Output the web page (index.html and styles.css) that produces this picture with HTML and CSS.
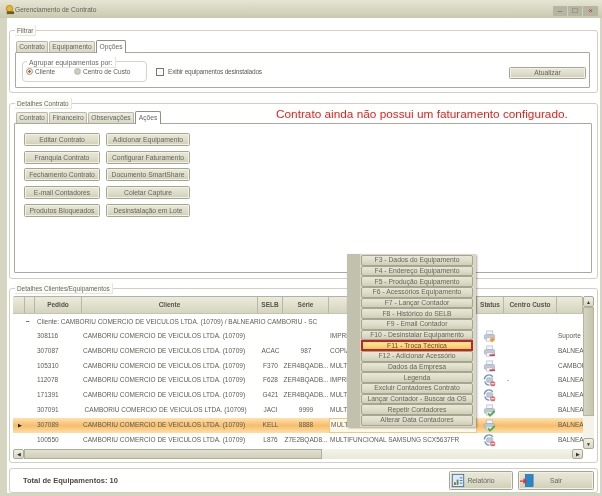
FILE: index.html
```html
<!DOCTYPE html>
<html lang="pt">
<head>
<meta charset="utf-8">
<title>Gerenciamento de Contrato</title>
<link rel="stylesheet" href="styles.css">
</head>
<body>
<svg class="defs" width="0" height="0">
  <defs>
    <symbol id="printer" viewBox="0 0 14 14">
      <rect x="4" y="1" width="6.5" height="4" fill="#f3f5f8" stroke="#aab4c2" stroke-width=".7"/>
      <rect x="1.5" y="5" width="11" height="5" rx="1" fill="#c0c9d5" stroke="#98a4b5" stroke-width=".6"/>
      <rect x="3.5" y="8.5" width="7" height="3.5" fill="#f7f8fa" stroke="#aab4c2" stroke-width=".6"/>
    </symbol>
    <symbol id="i-plus" viewBox="0 0 14 14">
      <use href="#printer" width="14" height="14"/>
      <path d="M10 8v5M7.5 10.500h5" stroke="#f09a2a" stroke-width="2"/>
    </symbol>
    <symbol id="i-minus" viewBox="0 0 14 14">
      <use href="#printer" width="14" height="14"/>
      <path d="M7 11h6" stroke="#d0404a" stroke-width="1.800"/>
    </symbol>
    <symbol id="i-check" viewBox="0 0 14 14">
      <use href="#printer" width="14" height="14"/>
      <path d="M5.500 10l2 2.500 5-5" fill="none" stroke="#4fb040" stroke-width="2"/>
    </symbol>
    <symbol id="i-sync" viewBox="0 0 14 14">
      <path d="M1.500 6a5 5 0 0 1 9-3" fill="none" stroke="#6f93d0" stroke-width="1.500"/>
      <path d="M2 8a5 5 0 0 0 5 4" fill="none" stroke="#6f93d0" stroke-width="1.500"/>
      <rect x="4" y="4" width="6.500" height="5" rx="1" fill="#c0c9d5" stroke="#98a4b5" stroke-width=".6"/>
      <circle cx="10.500" cy="10.500" r="2.800" fill="#d86a72"/>
      <path d="M8.500 10.500h4" stroke="#fff" stroke-width="1"/>
    </symbol>
  </defs>
</svg>
<div class="window">
  <header class="titlebar">
    <svg class="appicon" viewBox="0 0 12 12"><circle cx="6" cy="5" r="3.500" fill="#e8b52c" stroke="#a87c10" stroke-width=".8"/><rect x="3" y="8" width="8" height="3" fill="#6a5a20"/></svg>
    <span class="title">Gerenciamento de Contrato</span>
    <div class="winctl">
      <span class="ctl">–</span><span class="ctl">□</span><span class="ctl close">×</span>
    </div>
  </header>
  <main class="client">
    <section class="group g-filter">
      <span class="legend">Filtrar</span>
      <div class="tabs">
        <span class="tab t-contrato">Contrato</span><span class="tab t-equip">Equipamento</span><span class="tab active t-opc">Opções</span>
      </div>
      <div class="panel panel-filter">
        <div class="radiogroup">
          <span class="legend legend-small">Agrupar equipamentos por:</span>
          <span class="radio on"></span><span class="rlabel r1">Cliente</span>
          <span class="radio"></span><span class="rlabel">Centro de Custo</span>
        </div>
        <span class="check"></span><span class="clabel">Exibir equipamentos desinstalados</span>
        <button class="btn btn-atualizar">Atualizar</button>
      </div>
    </section>

    <section class="group g-contrato">
      <span class="legend">Detalhes Contrato</span>
      <div class="tabs">
        <span class="tab t-contrato">Contrato</span><span class="tab t-fin">Financeiro</span><span class="tab t-obs">Observações</span><span class="tab active t-acoes">Ações</span>
        <span class="alert">Contrato ainda não possui um faturamento configurado.</span>
      </div>
      <div class="panel panel-acoes">
        <button class="btn">Editar Contrato</button><button class="btn">Adicionar Equipamento</button>
        <button class="btn">Franquia Contrato</button><button class="btn">Configurar Faturamento</button>
        <button class="btn">Fechamento Contrato</button><button class="btn">Documento SmartShare</button>
        <button class="btn">E-mail Contadores</button><button class="btn">Coletar Capture</button>
        <button class="btn">Produtos Bloqueados</button><button class="btn">Desinstalação em Lote</button>
      </div>
    </section>

    <section class="group g-grid">
      <span class="legend">Detalhes Clientes/Equipamentos</span>
      <div class="grid">
        <div class="grid-main">
          <div class="row head">
            <span></span><span></span><span>Pedido</span><span>Cliente</span><span>SELB</span><span>Série</span><span></span><span>Status</span><span>Centro Custo</span><span></span>
          </div>
          <div class="rows">
            <div class="grouprow"><span class="minus">−</span>Cliente: CAMBORIU COMERCIO DE VEICULOS LTDA. (10709) / BALNEARIO CAMBORIU - SC</div>
            <div class="row"><span></span><span></span><span>308116</span><span>CAMBORIU COMERCIO DE VEICULOS LTDA. (10709)</span><span></span><span></span><span>IMPRESSORA</span><span><svg class="st"><use href="#i-plus"/></svg></span><span></span><span>Suporte</span></div>
            <div class="row"><span></span><span></span><span>307087</span><span>CAMBORIU COMERCIO DE VEICULOS LTDA. (10709)</span><span>ACAC</span><span>987</span><span>COPIADORA</span><span><svg class="st"><use href="#i-minus"/></svg></span><span></span><span>BALNEARIO</span></div>
            <div class="row"><span></span><span></span><span>105310</span><span>CAMBORIU COMERCIO DE VEICULOS LTDA. (10709)</span><span>F370</span><span>ZER4BQADB...</span><span>MULTIFUNCIONAL</span><span><svg class="st"><use href="#i-minus"/></svg></span><span></span><span>CAMBORIU</span></div>
            <div class="row"><span></span><span></span><span>112078</span><span>CAMBORIU COMERCIO DE VEICULOS LTDA. (10709)</span><span>F628</span><span>ZER4BQADB...</span><span>IMPRESSORA</span><span><svg class="st"><use href="#i-sync"/></svg></span><span>-</span><span>BALNEARIO</span></div>
            <div class="row"><span></span><span></span><span>171391</span><span>CAMBORIU COMERCIO DE VEICULOS LTDA. (10709)</span><span>G421</span><span>ZER4BQADB...</span><span>MULTIFUNCIONAL</span><span><svg class="st"><use href="#i-sync"/></svg></span><span></span><span>BALNEARIO</span></div>
            <div class="row"><span></span><span></span><span>307091</span><span class="shift">CAMBORIU COMERCIO DE VEICULOS LTDA. (10709)</span><span>JACI</span><span>9999</span><span>MULTIFUNCIONAL</span><span><svg class="st"><use href="#i-check"/></svg></span><span></span><span>BALNEARIO</span></div>
            <div class="row selected"><span class="arrow">▶</span><span></span><span>307089</span><span>CAMBORIU COMERCIO DE VEICULOS LTDA. (10709)</span><span>KELL</span><span>8888</span><span class="cell-edit">MULTIFUNCIONAL RICOH AF 3001S</span><span><svg class="st"><use href="#i-check"/></svg></span><span></span><span>BALNEARIO</span></div>
            <div class="row"><span></span><span></span><span>100550</span><span>CAMBORIU COMERCIO DE VEICULOS LTDA. (10709)</span><span>L876</span><span>Z7E2BQAD8...</span><span>MULTIFUNCIONAL SAMSUNG SCX5637FR</span><span><svg class="st"><use href="#i-sync"/></svg></span><span></span><span>BALNEARIO</span></div>
          </div>
        </div>
        <div class="vscroll">
          <span class="sbtn">▲</span><span class="vthumb"></span><span class="vtrack"></span><span class="sbtn">▼</span>
        </div>
        <div class="hscroll">
          <span class="sbtn">◀</span><span class="hthumb"></span><span class="htrack"></span><span class="sbtn">▶</span>
        </div>
      </div>
    </section>

    <section class="group g-footer">
      <strong class="total">Total de Equipamentos: 10</strong>
      <button class="btn bigbtn b-rel">
        <svg class="bigicon" viewBox="0 0 16 16"><rect x="1.500" y="1" width="13" height="14" fill="#dfe9f7" stroke="#3f6ea8"/><rect x="3.500" y="10" width="2" height="3" fill="#d04030"/><rect x="6.500" y="7" width="2" height="6" fill="#3a9a40"/><path d="M10 5h3M10 8h3M10 11h3" stroke="#3f6ea8"/></svg>
        <span>Relatório</span>
      </button>
      <button class="btn bigbtn b-sair">
        <svg class="bigicon" viewBox="0 0 16 16"><rect x="6" y="1" width="9" height="14" fill="#2a86c8" stroke="#1a5f98" stroke-width=".6"/><path d="M0 8h4V5l4 3.500L4 12V9.500H0z" fill="#e0302a"/></svg>
        <span>Sair</span>
      </button>
    </section>
  </main>
  <nav class="menu">
    <button class="mitem">F3 - Dados do Equipamento</button>
    <button class="mitem">F4 - Endereço Equipamento</button>
    <button class="mitem">F5 - Produção Equipamento</button>
    <button class="mitem">F6 - Acessórios Equipamento</button>
    <button class="mitem">F7 - Lançar Contador</button>
    <button class="mitem">F8 - Histórico do SELB</button>
    <button class="mitem">F9 - Email Contador</button>
    <button class="mitem">F10 - Desinstalar Equipamento</button>
    <button class="mitem hot">F11 - Troca Técnica</button>
    <button class="mitem">F12 - Adicionar Acessório</button>
    <button class="mitem">Dados da Empresa</button>
    <button class="mitem">Legenda</button>
    <button class="mitem">Excluir Contadores Contrato</button>
    <button class="mitem">Lançar Contador - Buscar da OS</button>
    <button class="mitem">Repetir Contadores</button>
    <button class="mitem">Alterar Data Contadores</button>
  </nav>
</div>
</body>
</html>
```
FILE: styles.css
```css
* { box-sizing: border-box; }
html, body { margin: 0; padding: 0; background: #fff; }
body { width: 602px; height: 496px; overflow: hidden; font: 6.500px "Liberation Sans", Arial, sans-serif; color: #5c5c54; }
.defs { position: absolute; }
.window { position: relative; width: 602px; height: 496px; display: flex; flex-direction: column; background: #d6d5c2; filter: blur(.3px); }

.titlebar { height: 18px; flex: none; display: flex; align-items: center; padding: 1px 0 0 4px; background: linear-gradient(#e6e5d4, #c9c8b0); }
.appicon { width: 11px; height: 11px; }
.title { font-size: 6.600px; margin-left: 0; color: #666658; }
.winctl { margin-left: auto; margin-right: 4px; display: flex; height: 10px; margin-top: 2px; background: #b5b5a2; border-radius: 1px; }
.ctl { width: 15px; text-align: center; line-height: 10px; font-size: 8px; color: #555; border-right: 1px solid #cfcfbe; }
.close { color: #c0322a; border-right: 0; }

.client { flex: 1; margin: 0 2px 3px 7px; padding: 12px 2px 0; background: #fff; display: flex; flex-direction: column; }

.group { position: relative; border: 1px solid #cfcfc2; border-radius: 3px; }
.legend { position: absolute; top: -6px; left: 5px; padding: 0 2px; height: 11px; line-height: 11px; font-size: 6.400px; background: #fbfbf6; border: 1px solid #e6e6da; border-width: 0 1px 1px 0; color: #666; z-index: 1; white-space: nowrap; }

.g-filter { height: 63px; padding: 9px 7px 5px 5px; }
.g-contrato { height: 176px; margin-top: 10px; padding: 7px 5px 5px 4px; }
.g-contrato .tabs { padding-left: 2px; }
.g-grid { height: 175px; margin-top: 9px; padding: 7px 3px 0 3px; }
.g-footer { height: 25px; margin-top: 5px; display: flex; align-items: center; padding-right: 3px; }

.tabs { display: flex; height: 12px; padding-left: 1px; align-items: flex-end; position: relative; z-index: 1; }
.tab { height: 11px; line-height: 10px; font-size: 6.700px; text-align: center; background: linear-gradient(#eeeddf, #d8d7c4); border: 1px solid #b8b8a8; border-bottom: 0; border-radius: 2px 2px 0 0; margin-right: 1px; color: #666; white-space: nowrap; }
.tab.active { height: 13px; margin-bottom: -1px; background: #fff; border-color: #8f8f86; line-height: 12px; }
.t-contrato { width: 32px; }
.t-equip { width: 46px; }
.t-opc { width: 30px; }
.t-fin { width: 38px; }
.t-obs { width: 46px; }
.t-acoes { width: 26px; }
.alert { margin-left: 114px; align-self: flex-start; margin-top: -3px; font-size: 11.800px; line-height: 12px; color: #e2231a; white-space: nowrap; }

.panel { border: 1px solid #a9a99e; border-radius: 1px; background: #fff; }
.panel-filter { height: 36px; display: flex; align-items: center; padding: 0 3px 0 6px; }
.panel-acoes { height: 150px; display: grid; grid-template-columns: 76px 84px; grid-auto-rows: 13px; gap: 4.700px 6px; padding: 9px 0 0 9px; }

.radiogroup { position: relative; width: 125px; height: 21px; margin-top: 3px; border: 1px solid #d4d4c8; border-radius: 4px; display: flex; align-items: center; padding-left: 3px; }
.radiogroup .legend { left: 4px; top: -5px; font-size: 6.900px; background: #fff; }
.radio { width: 7px; height: 7px; border-radius: 50%; background: radial-gradient(#d8d7c6, #bdbca8); border: 1px solid #bbb; flex: none; }
.radio.on { background: radial-gradient(#b0622a 35%, #ece8d8 40%); border-color: #9a9a8a; }
.rlabel { margin-left: 2px; white-space: nowrap; }
.r1 { width: 39px; }
.check { width: 8px; height: 8px; margin-left: 9px; margin-top: 3px; border: 1px solid #77776c; background: #fdfdf8; flex: none; }
.clabel { margin-left: 4px; white-space: nowrap; margin-top: 3px; letter-spacing: -.2px; }

.btn { padding: 0; margin: 0; font: 6.800px "Liberation Sans", Arial, sans-serif; color: #666660; background: linear-gradient(#e9e8d8, #e0dfcc 45%, #cfceb8); border: 1px solid #a6a690; border-radius: 1.500px; box-shadow: inset 0 0 0 1px #f2f1e6; white-space: nowrap; }
.btn-atualizar { width: 77px; height: 12px; margin-left: auto; margin-top: 5px; }

.grid { display: grid; grid-template-columns: 570px 11px; grid-template-rows: 153px 10px; border: 0; }
.grid-main { overflow: hidden; }
.row { display: grid; grid-template-columns: 12px 10px 47px 176px 25px 46px 148px 27px 53px 26px; height: 14.800px; align-items: center; white-space: nowrap; }
.row > span { overflow: hidden; height: 100%; line-height: 14.800px; }
.row > span:nth-child(3) { padding-left: 2px; }
.row > span:nth-child(4) { padding-left: 1px; }
.row > span:nth-child(5), .row > span:nth-child(6) { text-align: center; }
.row > span:nth-child(7) { padding-left: 1px; }
.row > span:nth-child(8) { padding-left: 6px; }
.row > span:nth-child(9) { padding-left: 3px; }
.row > span:nth-child(10) { padding-left: 1px; }
.shift { padding-left: 2.500px !important; }
.head { height: 18px; background: linear-gradient(#ecebdb, #d5d4bf); border-top: 1px solid #b2b2a0; border-bottom: 1px solid #c4c4b2; border-radius: 2px 2px 0 0; }
.head > span { height: 100%; line-height: 16px; padding: 0 !important; text-align: center !important; font-weight: 700; color: #55554c; border-right: 1px solid #b8b8a6; }
.rows { height: 135px; overflow: hidden; }
.grouprow { height: 15px; line-height: 15px; padding-left: 13px; white-space: nowrap; }
.minus { display: inline-block; width: 11px; font-weight: 700; color: #333; }
.selected { background: linear-gradient(#fde3b0, #f7bd6a 50%, #fddfa8); }
.arrow { font-size: 5px; text-align: right; color: #222; padding-right: 3px; }
.cell-edit { background: #fff8e6; border: 1px solid #f3c67c; line-height: 12.800px !important; }
.st { width: 13px; height: 13px; display: block; margin-top: 1px; }

.vscroll { grid-row: 1; grid-column: 2; display: flex; flex-direction: column; }
.hscroll { grid-row: 2; grid-column: 1; display: flex; }
.sbtn { flex: none; display: flex; align-items: center; justify-content: center; font-size: 5px; color: #333; background: linear-gradient(#f0efe2, #d8d7c4); border: 1px solid #a9a996; border-radius: 2px; }
.vscroll .sbtn { height: 11px; }
.hscroll .sbtn { width: 11px; }
.vthumb { height: 109px; background: linear-gradient(90deg, #d5d4bf, #c5c4ac); border: 1px solid #b5b5a0; }
.vtrack { flex: 1; background: #f3f3e9; }
.hthumb { width: 298px; background: linear-gradient(#e2e1cf, #cfceb9); border: 1px solid #aeae9b; }
.htrack { flex: 1; background: linear-gradient(#f3f3e8, #e9e8d9); }

.total { margin-left: 13px; font-size: 7.500px; color: #4b4b44; margin-right: auto; margin-top: -1px; }
.bigbtn { height: 19px; display: flex; align-items: center; padding-left: 1px; }
.bigbtn span { flex: 1; text-align: center; padding-right: 15px; }
.bigicon { width: 14px; height: 15px; flex: none; }
.b-rel { width: 64px; }
.b-sair { width: 76px; margin-left: 5px; }

.menu { position: absolute; left: 347px; top: 254px; width: 129px; height: 173px; padding: 1px 3px 0 14px; display: grid; grid-auto-rows: 10.670px; background: linear-gradient(90deg, #c2c1ad 13px, #d9d8c6 13px); box-shadow: 1px 1px 2px rgba(0,0,0,.35); z-index: 5; }
.mitem { padding: 0; margin: 0; font: 6.800px "Liberation Sans", Arial, sans-serif; color: #66665c; background: linear-gradient(#e9e8d8, #dddcc8 55%, #cfceb8); border: 1px solid #a6a690; border-radius: 2px; white-space: nowrap; line-height: 8px; }
.hot { background: linear-gradient(#fde7a2, #f9c65e); border: 2px solid #bf2626; border-radius: 0; color: #6a4a20; }
```
